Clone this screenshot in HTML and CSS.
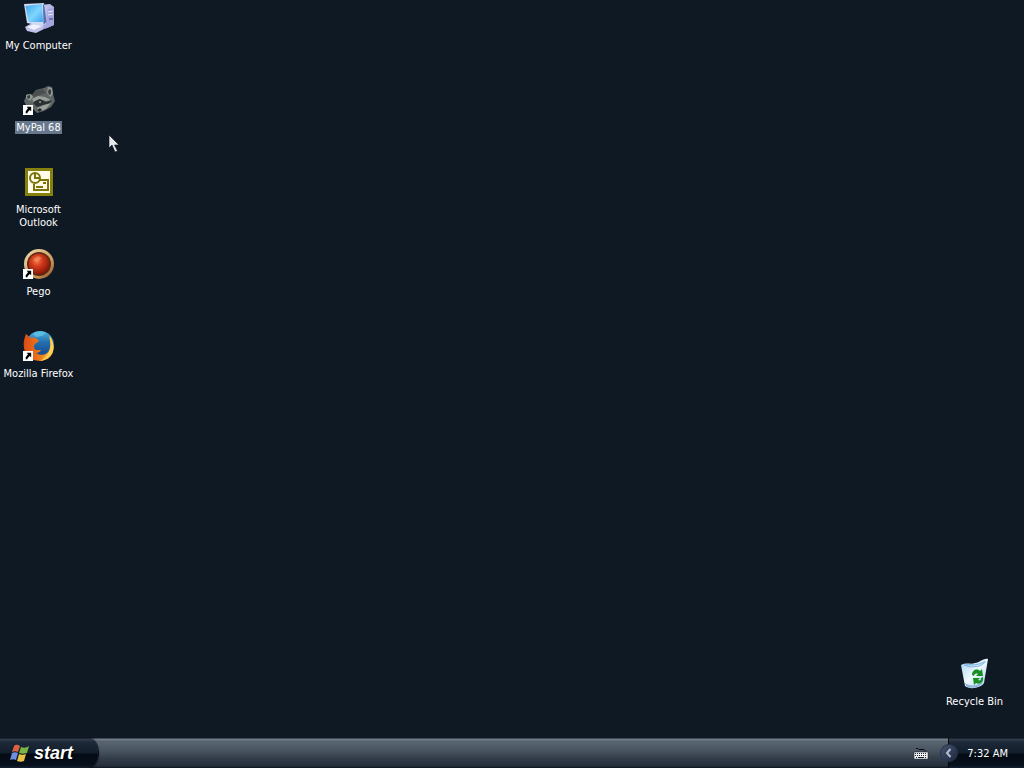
FILE: index.html
```html
<!DOCTYPE html>
<html lang="en">
<head>
<meta charset="utf-8">
<title>Desktop</title>
<link rel="stylesheet" href="styles.css">
</head>
<body>
<svg class="defs" aria-hidden="true">
  <defs>
    <linearGradient id="screen" x1="0" y1="0" x2="1" y2="1"><stop offset="0" stop-color="#3ba5ea"/><stop offset=".55" stop-color="#7fd6ff"/><stop offset="1" stop-color="#3f9fe8"/></linearGradient>
    <linearGradient id="tower" x1="0" y1="0" x2="1" y2="1"><stop offset="0" stop-color="#d0d1f4"/><stop offset="1" stop-color="#8c8fcf"/></linearGradient>
    <radialGradient id="gem" cx=".4" cy=".35" r=".7"><stop offset="0" stop-color="#f27a50"/><stop offset=".4" stop-color="#d03a1b"/><stop offset="1" stop-color="#7c1204"/></radialGradient>
    <linearGradient id="ring" x1="0" y1="0" x2="1" y2="1"><stop offset="0" stop-color="#f0dcae"/><stop offset=".6" stop-color="#d0a066"/><stop offset="1" stop-color="#8b501f"/></linearGradient>
    <linearGradient id="globe" x1="0" y1="0" x2="0" y2="1"><stop offset="0" stop-color="#49b4e2"/><stop offset=".4" stop-color="#246fae"/><stop offset="1" stop-color="#123f86"/></linearGradient>
    <linearGradient id="fox" x1="0" y1="0" x2="1" y2="0"><stop offset="0" stop-color="#d94a17"/><stop offset=".6" stop-color="#f0801e"/><stop offset="1" stop-color="#ffc648"/></linearGradient>
    <linearGradient id="bin" x1="0" y1="0" x2="1" y2="1"><stop offset="0" stop-color="#a9d4f4"/><stop offset=".5" stop-color="#eef8ff"/><stop offset="1" stop-color="#a5caea"/></linearGradient>
    <symbol id="shortcut" viewBox="0 0 11 11"><path fill="#fff" d="M0 0h11v11H0z"/><path fill="#000" d="M4 2h5v5L7.500 5.500 5 8v1H3V7l2.500-3.500z"/></symbol>
  </defs>
</svg>
<main class="desktop">
  <nav class="icons" aria-label="Desktop icons">
    <a class="item" href="#computer">
      <svg class="icon" viewBox="0 0 32 32" aria-hidden="true">
        <path fill="url(#tower)" d="M18 3l9-1 4 3v18l-9 4-4-2z"/>
        <path fill="#a5a6dc" d="M25 7l6-1v17l-7 3z"/>
        <path stroke="#eeeeff" d="M25 10l5-1M25 13l5-1"/>
        <path fill="#6f73b5" d="M26 16h4v2h-4z"/>
        <path fill="#bfc1e8" d="M2 25l7-4 11 3 1 3-8 4-9-2z"/>
        <path fill="#f2f2ff" d="M4 25l7-3 8 2-8 4z"/>
        <path fill="#cfdaf2" d="M1 2l20-1 2 20-4 3L4 21z"/>
        <path fill="url(#screen)" d="M2.500 4l16.500-2 1 18L5.500 20z"/>
        <path fill="#5370ad" d="M21 2l2.500 18-3 2.500L20 3z"/>
      </svg>
      <span class="label">My Computer</span>
    </a>
    <a class="item selected" href="#mypal">
      <svg class="icon" viewBox="0 0 32 32" aria-hidden="true">
        <path fill="#5f6464" d="M3 13l1-3 5 1 4-5 8-2 4-2 4 1 1 7 2 7-4 6-7 4-7 2-5-5-6-3-2-4z"/>
        <path fill="#929792" d="M25 3l4 1 1 6-3 3-3-4zM3 11l5-1 2 3-3 4-4-3z"/>
        <path fill="#363b3d" d="M26 5l2 1v4l-2 1-1-3zM4 12l3-1v3l-2 1z"/>
        <path fill="#4b4f50" d="M12 7l8-2 3 4-6 2-6 2-2-2z"/>
        <path fill="#9a9f9a" d="M9 15l6-3 7 1 6 3-5 1-7-2-5 4z"/>
        <path fill="#2b3032" d="M12 17l5-2 6 3 6-2-3 4-6 1-6 2-4-4z"/>
        <path fill="#9ba09b" d="M14 24l7-3 7-2-5 6-8 3z"/>
        <circle cx="17" cy="18" r="1" fill="#989c9a"/>
        <path fill="#222829" d="M14 26l3-2 2 2-3 2z"/>
        <use href="#shortcut" x="0" y="21" width="10" height="10"/>
      </svg>
      <span class="label">MyPal 68</span>
    </a>
    <a class="item" href="#outlook">
      <svg class="icon" viewBox="0 0 32 32" aria-hidden="true">
        <path fill="#86810a" d="M2 2h28v28H2z"/><path fill="#fffde9" d="M5 5h22v22H5z"/>
        <path fill="none" stroke="#7b7507" stroke-width="2" d="M17 14h8v10H11v-6"/>
        <path stroke="#7b7507" stroke-width="2" d="M13 21h7M20 17h3"/>
        <circle cx="12" cy="12" r="5" fill="#fffde9" stroke="#7b7507" stroke-width="2"/>
        <path fill="none" stroke="#7b7507" stroke-width="2" d="M12 8v4h4"/>
      </svg>
      <span class="label">Microsoft Outlook</span>
    </a>
    <a class="item" href="#pego">
      <svg class="icon" viewBox="0 0 32 32" aria-hidden="true">
        <circle cx="16" cy="16" r="15" fill="url(#ring)"/>
        <circle cx="16" cy="16" r="12" fill="#5b2a14"/>
        <circle cx="16" cy="16" r="10.500" fill="url(#gem)"/>
        <path fill="#ff9d70" opacity=".5" d="M10 12l5-4 4 2-5 4z"/>
        <use href="#shortcut" x="0" y="21" width="10" height="10"/>
      </svg>
      <span class="label">Pego</span>
    </a>
    <a class="item" href="#firefox">
      <svg class="icon" viewBox="0 0 32 32" aria-hidden="true">
        <circle cx="17" cy="15" r="14" fill="url(#globe)"/>
        <path fill="#69c5e8" opacity=".7" d="M10 4c4-3 9-3 13-1l-4 3-6 1z"/>
        <path fill="url(#fox)" d="M3 4c2 1 3 3 4 4 3-1 5 0 7 1l2 2-4 3c-2 2-1 5 1 6l5 0c-1 2-3 3-5 3 6 4 13 1 14-5 1-4 0-8-1-11 9 10 4 24-9 24C3 31-3 18 3 4z"/>
        <path fill="#ffd052" d="M26 5c9 11 4 24-9 26 9-5 13-14 9-26z"/>
        <use href="#shortcut" x="0" y="21" width="10" height="10"/>
      </svg>
      <span class="label">Mozilla Firefox</span>
    </a>
  </nav>
  <a class="item" href="#recycle">
    <svg class="icon" viewBox="0 0 32 32" aria-hidden="true">
      <path fill="url(#bin)" d="M2 7c6-3 10 0 14-2 5 0 8-5 13-4l-4 24c-3 5-14 7-19 3z"/>
      <path fill="#86b9e2" d="M4 7c5-2 9 0 13-1 4 0 7-3 10-3-3 5-7 6-11 6-5 1-8 0-12-2z"/>
      <path fill="#c9e5f9" d="M8 7c4 1 12 1 17-3-3 4-6 4-9 4-4 1-7 0-8-1z"/>
      <path fill="#8fb4da" d="M6 25c5 4 14 3 18-2l-1 3c-4 4-13 5-16 2z"/>
      <path fill="#168f22" d="M13 17c0-5 5-7 8-4l2-2 1 7h-7l2-2c-2-1-4 0-4 2zM24 19c1 5-3 8-7 6l-2 2-1-7h7l-2 2c2 1 3 0 3-2z"/>
    </svg>
    <span class="label">Recycle Bin</span>
  </a>
  <svg class="cursor" viewBox="0 0 12 20" aria-hidden="true"><path fill="#e6eaed" stroke="#0a0f16" stroke-width=".6" d="M1 1v13l3-3 3 7 2.500-1L6.500 11H11z"/></svg>
</main>
<footer class="taskbar">
  <button class="start" type="button">
    <svg class="flag" viewBox="0 0 20 20" aria-hidden="true">
      <path fill="#dc6042" d="M4 3c2-2 4-1 6 0L8 9C6 8 4 8 2 9z"/>
      <path fill="#79b645" d="M11 4c3 1 5 1 8-1l-2 7c-3 1-5 1-8 0z"/>
      <path fill="#6d8fe0" d="M2 10c2-1 4-1 6 0l-2 7c-2-1-4-1-6 0z"/>
      <path fill="#e9c143" d="M9 11c2 1 5 1 7 0l-2 7c-2 1-5 1-7 0z"/>
    </svg>
    <span>start</span>
  </button>
  <div class="tasks">
    <button class="keyboard" type="button" aria-label="Keyboard">
      <svg viewBox="0 0 16 12" aria-hidden="true"><path fill="none" stroke="#05080d" stroke-width="1" d="M3 1.500h2l1 1h5l1 1v1"/><path fill="#f1f3f5" stroke="#10151c" stroke-width=".5" d="M1 5h14v7H1z"/><path stroke="#1c222b" stroke-dasharray="1 1" d="M2 6.500h12M2 8.500h12"/><path stroke="#1c222b" d="M3 10.500h1M5 10.500h6M12 10.500h1"/></svg>
    </button>
  </div>
  <div class="tray">
    <button class="expand" type="button" aria-label="Show hidden icons"><svg viewBox="0 0 16 16" aria-hidden="true"><path fill="none" stroke="#b3bed2" stroke-width="2" d="M9.500 4L6 8l3.500 4"/></svg></button>
    <time class="clock" datetime="07:32">7:32 AM</time>
  </div>
</footer>
</body>
</html>
```
FILE: styles.css
```css
* { box-sizing: border-box; }
body {
  margin: 0;
  min-height: 100vh;
  display: flex;
  flex-direction: column;
  background: #0f1924;
  color: #fff;
  font: 11px/13px "DejaVu Sans Condensed", Tahoma, sans-serif;
}
button { border: 0; padding: 0; background: none; color: inherit; font: inherit; }
svg { display: block; }
.defs { position: absolute; width: 0; height: 0; }
.desktop {
  flex: 1;
  position: relative;
  display: flex;
  justify-content: space-between;
  align-items: flex-end;
  padding-right: 11px;
}
.icons { align-self: flex-start; }
.item {
  display: flex;
  flex-direction: column;
  align-items: center;
  gap: 5px;
  width: 77px;
  height: 82px;
  padding-top: 2px;
  color: inherit;
  text-align: center;
  text-decoration: none;
}
.icon { width: 32px; height: 32px; }
.label { padding: 0 1px; }
.selected .label { background: #67788d; }
.cursor { position: absolute; left: 108px; top: 134px; width: 12px; height: 20px; }
.taskbar {
  display: flex;
  height: 30px;
  background: linear-gradient(#070c12 0, #7a8694 1px, #5a6572 3px, #4b5663 12px, #343e4b 20px, #252e3a 28px, #0c131c 30px);
}
.start {
  display: flex;
  align-items: center;
  gap: 4px;
  width: 98px;
  padding-left: 10px;
  border-radius: 0 10px 10px 0 / 0 15px 15px 0;
  background: linear-gradient(#05090e 0, #33404f 1px, #1d2938 4px, #131e2c 15px, #040a13 16px, #07101c 27px, #142031 30px);
  box-shadow: 1px 0 1px #05090e;
  font: italic bold 18px/24px "Liberation Sans", Arial, sans-serif;
  text-shadow: 1px 1px 1px #000;
}
.flag { width: 20px; height: 20px; }
.tasks { flex: 1; display: flex; align-items: center; justify-content: flex-end; padding-right: 19px; }
.keyboard svg { width: 16px; height: 12px; }
.tray {
  display: flex;
  align-items: center;
  gap: 9px;
  padding-right: 16px;
  border-left: 1px solid #05090e;
  background: linear-gradient(#05090e 0, #33404f 1px, #1d2938 4px, #131e2c 15px, #040a13 16px, #07101c 27px, #142031 30px);
}
.expand {
  width: 18px;
  height: 18px;
  margin-left: -9px;
  border: 1px solid #263247;
  border-radius: 50%;
  background: linear-gradient(135deg, #46536c, #1b2840);
}
```
